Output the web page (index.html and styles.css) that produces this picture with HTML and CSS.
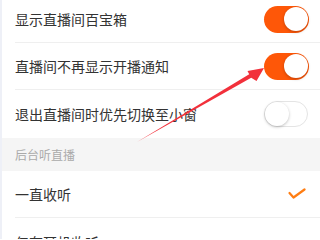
FILE: index.html
```html
<!DOCTYPE html>
<html lang="zh">
<head>
<meta charset="utf-8">
<link rel="stylesheet" href="styles.css">
</head>
<body>
<div class="page">
  <div class="list">
    <div class="row">
      <span class="label">显示直播间百宝箱</span>
      <span class="toggle on"><span class="knob"></span></span>
    </div>
    <div class="row">
      <span class="label">直播间不再显示开播通知</span>
      <span class="toggle on"><span class="knob"></span></span>
    </div>
    <div class="row last">
      <span class="label">退出直播间时优先切换至小窗</span>
      <span class="toggle off"><span class="knob"></span></span>
    </div>
  </div>
  <div class="section">后台听直播</div>
  <div class="list">
    <div class="row">
      <span class="label">一直收听</span>
      <svg class="check" viewBox="0 0 18 12" width="18" height="12"><path d="M1.5 5 L5.5 9.5 L16.5 1.5" fill="none" stroke="#ff7d12" stroke-width="2.2" stroke-linecap="round" stroke-linejoin="round"/></svg>
    </div>
    <div class="row last">
      <span class="label">仅在耳机收听</span>
    </div>
  </div>
  <svg class="arrow" viewBox="0 0 320 239" width="320" height="239">
    <polygon points="137,142 249.2,74.3 247.5,71 264,68 256.5,81 251.2,77.7" fill="#f2303b"/>
  </svg>
</div>
</body>
</html>
```

FILE: styles.css
```css
html, body {
  margin: 0;
  padding: 0;
  background: #ffffff;
}
body {
  width: 320px;
  height: 239px;
  overflow: hidden;
  font-family: "Noto Sans CJK SC", "Noto Sans", sans-serif;
}
.page {
  position: relative;
  width: 320px;
  height: 239px;
  overflow: hidden;
  border-left: 2px solid #eef0f7;
  box-sizing: border-box;
}
.list {
  background: #fff;
}
.list:first-child {
  margin-top: -4px;
}
.row {
  display: flex;
  align-items: center;
  justify-content: space-between;
  height: 47px;
  margin-left: 13px;
  padding-right: 11px;
  border-bottom: 1px solid #efefef;
  box-sizing: border-box;
}
.row.last {
  border-bottom: none;
}
.label {
  font-size: 14px;
  color: #333333;
  letter-spacing: 0;
}
.section {
  height: 33px;
  margin-top: 1px;
  background: #f5f5f5;
  display: flex;
  align-items: center;
  padding-left: 13px;
  font-size: 12px;
  color: #aaaaaa;
}
.toggle {
  position: relative;
  width: 45px;
  height: 27px;
  border-radius: 14px;
  box-sizing: border-box;
}
.toggle.on {
  background: #fe5708;
}
.toggle.off {
  background: #ffffff;
  border: 1px solid #e4e4e4;
  width: 44px;
  height: 26px;
  margin-right: 1px;
}
.knob {
  position: absolute;
  top: 1.5px;
  width: 24px;
  height: 24px;
  border-radius: 50%;
  background: #ffffff;
  box-shadow: 0 1px 3px rgba(0,0,0,0.25);
}
.toggle.on .knob {
  right: 1.5px;
}
.toggle.off .knob {
  left: 0;
  top: 0;
}
.check {
  margin-right: 3px;
}
.arrow {
  position: absolute;
  left: -2px;
  top: 0;
  pointer-events: none;
}
```
